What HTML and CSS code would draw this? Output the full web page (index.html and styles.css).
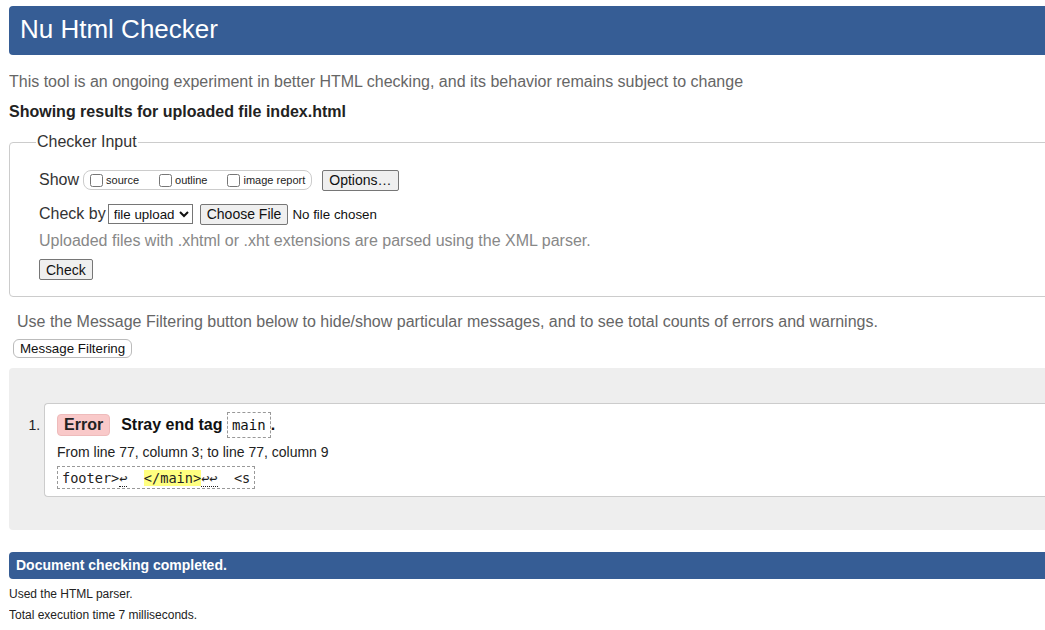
FILE: index.html
```html
<!DOCTYPE html>
<html lang="en">
<head>
<meta charset="utf-8">
<title>Nu Html Checker</title>
<link rel="stylesheet" href="styles.css">
</head>
<body>
<h1 class="title">Nu Html Checker</h1>
<p class="intro">This tool is an ongoing experiment in better HTML checking, and its behavior remains subject to change</p>
<p class="showing">Showing results for uploaded file index.html</p>
<fieldset class="input">
  <legend class="legend">Checker Input</legend>
  <div class="row show-row">
    <span class="row-label">Show</span>
    <span class="pill">
      <label class="opt"><input type="checkbox" class="cb">source</label>
      <label class="opt"><input type="checkbox" class="cb">outline</label>
      <label class="opt"><input type="checkbox" class="cb">image report</label>
    </span>
    <button class="btn options">Options…</button>
  </div>
  <div class="row by-row">
    <span class="row-label">Check by</span>
    <select class="sel"><option>file upload</option></select>
    <button class="btn choose">Choose File</button>
    <span class="nofile">No file chosen</span>
  </div>
  <p class="hint">Uploaded files with .xhtml or .xht extensions are parsed using the XML parser.</p>
  <button class="btn check">Check</button>
</fieldset>
<p class="filter-note">Use the Message Filtering button below to hide/show particular messages, and to see total counts of errors and warnings.</p>
<button class="btn filter">Message Filtering</button>
<div class="results">
  <ol class="messages">
    <li class="msg">
      <p class="msg-head"><strong class="badge">Error</strong><span class="msg-text">Stray end tag <code class="code">main</code>.</span></p>
      <p class="loc">From line 77, column 3; to line 77, column 9</p>
      <p class="extract"><code class="extract-code">footer&gt;<span class="lf">↩</span>  <b class="hl">&lt;/main&gt;</b><span class="lf">↩↩</span>  &lt;s</code></p>
    </li>
  </ol>
</div>
<p class="done">Document checking completed.</p>
<p class="meta">Used the HTML parser.</p>
<p class="meta">Total execution time 7 milliseconds.</p>
</body>
</html>
```
FILE: styles.css
```css
html {
  overflow: hidden;
  background: #fff;
}
body {
  margin: 0 0 0 9px;
  width: 1100px;
  font-family: "Liberation Sans", Arial, sans-serif;
  color: #222;
}
.title {
  margin: 6px 0 0;
  height: 49px;
  line-height: 47px;
  padding-left: 11px;
  font-size: 26px;
  font-weight: normal;
  color: #fff;
  background: #365d95;
  border-radius: 4px;
}
.intro {
  margin: 17px 0 0;
  font-size: 16px;
  line-height: 20px;
  color: #666;
}
.showing {
  margin: 10px 0 10px;
  font-size: 16px;
  line-height: 20px;
  font-weight: bold;
  color: #222;
}
.input {
  margin: 0;
  padding: 0 0 16px 29px;
  border: 1px solid #ccc;
  border-radius: 4px;
}
.legend {
  padding: 0 1px;
  margin-left: -3px;
  font-size: 16px;
  line-height: 20px;
  color: #333;
}
.row {
  display: flex;
  align-items: center;
  height: 22px;
}
.show-row {
  margin-top: 17px;
}
.by-row {
  margin-top: 12px;
}
.row-label {
  font-size: 16px;
  color: #333;
}
.pill {
  display: inline-flex;
  align-items: center;
  margin-left: 4px;
  height: 18px;
  padding: 0 6px 0 6px;
  border: 1px solid #ccc;
  border-radius: 8px;
}
.opt {
  display: inline-flex;
  align-items: center;
  font-size: 11px;
  color: #222;
  margin-right: 20px;
}
.opt:last-child {
  margin-right: 0;
}
.cb {
  margin: 0 3px 0 0;
  width: 13px;
  height: 13px;
}
.btn {
  font-family: "Liberation Sans", Arial, sans-serif;
  color: #111;
  background: #efefef;
  border: 1px solid #767676;
  border-radius: 2px;
  padding: 0 6px;
}
.options {
  margin-left: 10px;
  height: 21px;
  font-size: 14px;
}
.sel {
  margin-left: 2px;
  height: 20px;
  font-family: "Liberation Sans", Arial, sans-serif;
  font-size: 13.33px;
  color: #111;
  border: 1px solid #767676;
  border-radius: 0;
  padding: 0 1px;
  background: #fff;
}
.choose {
  margin-left: 7px;
  height: 21px;
  font-size: 14px;
  padding: 0 6px;
}
.nofile {
  margin-left: 4px;
  font-size: 13.33px;
  color: #111;
}
.hint {
  margin: 6px 0 0;
  font-size: 16px;
  line-height: 20px;
  color: #888;
}
.check {
  display: block;
  margin-top: 8px;
  height: 21px;
  font-size: 14px;
}
.filter-note {
  margin: 15px 0 0;
  padding-left: 8px;
  font-size: 16px;
  line-height: 20px;
  color: #666;
}
.filter {
  display: block;
  margin: 7px 0 0 4px;
  height: 19px;
  font-size: 13.33px;
  background: #fff;
  border: 1px solid #bbb;
  border-radius: 6px;
  padding: 0 6px;
}
.results {
  margin-top: 10px;
  height: 162px;
  box-sizing: border-box;
  padding-top: 35px;
  background: #eee;
  border-radius: 4px;
}
.messages {
  margin: 0;
  padding-left: 35px;
}
.msg {
  font-size: 14px;
  background: #fff;
  border: 1px solid #ccc;
  border-right: 0;
  border-radius: 4px 0 0 4px;
  padding: 8px 0 7px 12px;
  height: 94px;
  box-sizing: border-box;
}
.msg::marker {
  font-size: 14px;
  color: #222;
}
.msg-head {
  margin: 0;
  display: flex;
  align-items: center;
  height: 26px;
}
.badge {
  display: inline-block;
  font-size: 16px;
  line-height: 18px;
  padding: 1px 6px;
  background: #f9c9c9;
  border: 1px solid #ebb;
  border-radius: 4px;
  color: #222;
}
.msg-text {
  margin-left: 11px;
  font-size: 16px;
  font-weight: bold;
  color: #111;
}
.code {
  font-family: "DejaVu Sans Mono", "Liberation Mono", monospace;
  font-weight: normal;
  font-size: 14px;
  border: 1px dashed #999;
  padding: 4px 4px;
}
.loc {
  margin: 6px 0 0;
  font-size: 14px;
  line-height: 16px;
  color: #222;
}
.extract {
  margin: 6px 0 0;
}
.extract-code {
  display: inline-block;
  font-family: "DejaVu Sans Mono", "Liberation Mono", monospace;
  font-size: 13.6px;
  line-height: 18px;
  padding: 2px 4px 1px;
  border: 1px dashed #999;
  white-space: pre;
  color: #222;
}
.lf {
  border-bottom: 1px dotted #222;
}
.hl {
  font-weight: normal;
  background: #ffff80;
}
.done {
  margin: 22px 0 0;
  height: 27px;
  line-height: 27px;
  padding-left: 7px;
  font-size: 14px;
  font-weight: bold;
  color: #fff;
  background: #365d95;
  border-radius: 4px;
}
.meta {
  margin: 8px 0 0;
  font-size: 12px;
  line-height: 15px;
  color: #222;
}
.meta + .meta {
  margin-top: 6px;
}
```
